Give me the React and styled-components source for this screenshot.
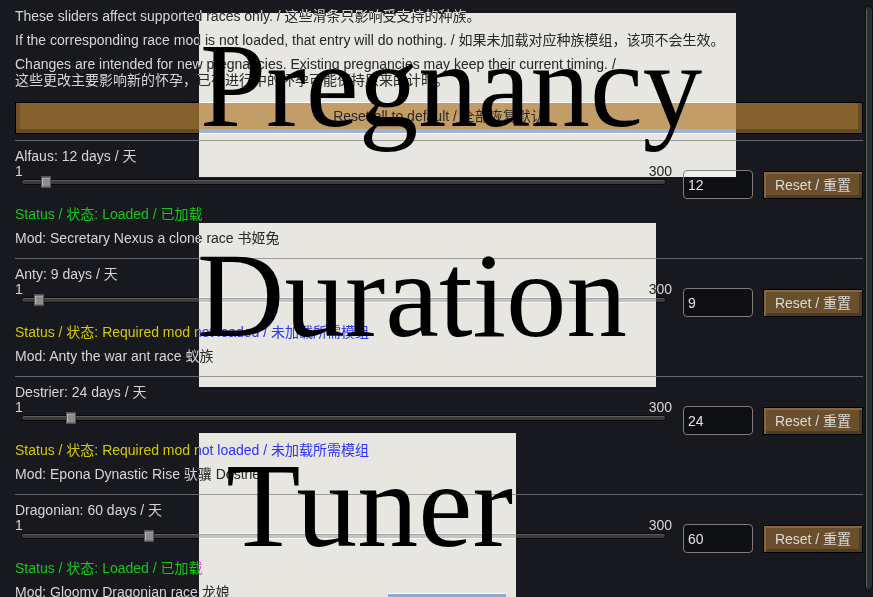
import React from "react";
import styled, { createGlobalStyle } from "styled-components";

const GlobalStyle = createGlobalStyle`
  html,
  body {
    margin: 0;
    padding: 0;
    background: #17191e;
  }
  body {
    font-family: "Liberation Sans", "Noto Sans CJK SC", sans-serif;
  }
`;

const Window = styled.div`
  position: relative;
  display: flex;
  width: 873px;
  height: 597px;
  overflow: hidden;
  background: #17191e;
  color: #d6d6d6;
  font-size: 14px;
  line-height: 16px;
`;

const Content = styled.div`
  flex: none;
  width: 848px;
  padding: 8px 0 0 15px;
`;

const Para = styled.p`
  margin: 0 0 8px;
`;

const ResetAll = styled.div`
  display: flex;
  box-sizing: border-box;
  height: 32px;
  margin-top: 14px;
  margin-bottom: 6px;
  padding: 0 4px 4px 4px;
  border: 1px solid #000;
  background: #17191e;
  box-shadow: inset 0 -4px 0 #654a25, inset 4px 0 0 #6e5029, inset -4px 0 0 #654a25;
`;

const ResetAllFace = styled.div`
  position: relative;
  z-index: 2;
  flex: 1;
  display: flex;
  align-items: center;
  justify-content: center;
  background: rgba(179, 127, 54, 0.71);
  color: #2c2a27;
`;

const Row = styled.div`
  border-top: 1px solid #63656a;
  padding: 7px 0 12px;
`;

const SliderLine = styled.div`
  display: flex;
  align-items: flex-start;
`;

const SliderColumn = styled.div`
  width: 657px;
`;

const Scale = styled.div`
  display: flex;
  justify-content: space-between;
  line-height: 14px;
  height: 14px;
`;

const Track = styled.div`
  position: relative;
  height: 4px;
  margin: 1px 6px 0;
  border: 1px solid #0a0a0a;
  border-radius: 3px;
  background: #3b3b3b;
  box-shadow: inset 0 1px 0 #5c5c5c;
`;

const Handle = styled.span`
  position: absolute;
  top: 50%;
  width: 8px;
  height: 9px;
  transform: translate(-50%, -50%);
  border: 1px solid #555;
  background: #8d8d8d;
  box-shadow: inset 1px 1px 0 #b8b8b8;
`;

const ValueBox = styled.div`
  display: flex;
  align-items: center;
  box-sizing: border-box;
  width: 70px;
  height: 29px;
  margin: 6px 0 0 11px;
  padding-left: 4px;
  border: 1px solid #7d7d7d;
  border-radius: 4px;
  background: #0e0f12;
  color: #e2e2e2;
`;

const ResetButton = styled.div`
  display: flex;
  align-items: center;
  justify-content: center;
  box-sizing: border-box;
  width: 100px;
  height: 28px;
  margin: 7px 0 0 10px;
  border: 1px solid #000;
  background: #6a4f2c;
  box-shadow: inset 2px 2px 0 #86683c, inset -3px -3px 0 #523c20;
  color: #dadada;
`;

const Status = styled.div`
  margin-top: 7px;
  color: ${(p) => (p.$loaded ? "#10cc10" : "#d4c800")};
`;

const ModLine = styled.div`
  margin-top: 8px;
`;

const Gutter = styled.div`
  flex: none;
  width: 8px;
  margin-left: 2px;
  padding-top: 6px;
`;

const Thumb = styled.div`
  width: 6px;
  height: 582px;
  border: 1px solid #0b0c0e;
  border-radius: 4px;
  background: #2c2e32;
  box-shadow: inset 1px 0 0 #5d5f63;
`;

/* the title card: an inverting pane with the serif word laid over it */
const Pane = styled.div`
  position: absolute;
  left: ${(p) => p.$x}px;
  top: ${(p) => p.$y}px;
  width: ${(p) => p.$w}px;
  height: ${(p) => p.$h}px;
  z-index: 1;
  backdrop-filter: invert(1);
  -webkit-backdrop-filter: invert(1);
`;

const WordLayer = styled.div`
  position: absolute;
  left: ${(p) => p.$x}px;
  top: ${(p) => p.$y}px;
  width: ${(p) => p.$w}px;
  height: ${(p) => p.$h}px;
  z-index: 3;
  overflow: hidden;
  pointer-events: none;
`;

const Word = styled.span`
  display: block;
  margin: 12px 0 0 ${(p) => p.$indent}px;
  font-family: "Liberation Serif", "Times New Roman", serif;
  font-size: ${(p) => p.$size}px;
  line-height: 1;
  color: #000;
  white-space: nowrap;
  transform-origin: 0 0;
  transform: scaleY(${(p) => (80.2 / (0.662 * p.$size)).toFixed(3)});
`;

const Tab = styled.span`
  position: absolute;
  left: 189px;
  top: 160px;
  width: 118px;
  height: 10px;
  border-top: 1px solid #fff;
  background: #8ea9d4;
`;

const races = [
  { name: "Alfaus", days: 12, loaded: true, mod: "Secretary Nexus a clone race 书姬兔" },
  { name: "Anty", days: 9, loaded: false, mod: "Anty the war ant race 蚁族" },
  { name: "Destrier", days: 24, loaded: false, mod: "Epona Dynastic Rise 驮骥 Destrier" },
  { name: "Dragonian", days: 60, loaded: true, mod: "Gloomy Dragonian race 龙娘" },
];

const cards = [
  { word: "Pregnancy", x: 199, y: 13, w: 537, h: 164, size: 119, indent: 1 },
  { word: "Duration", x: 199, y: 223, w: 457, h: 164, size: 121, indent: -2 },
  { word: "Tuner", x: 199, y: 433, w: 317, h: 170, size: 122, indent: 27, tab: true },
];

const MIN = 1;
const MAX = 300;

const RaceRow = ({ race }) => {
  const pct = ((race.days - MIN) / (MAX - MIN)) * 100;
  return (
    <Row>
      <div>
        {race.name}: {race.days} days / 天
      </div>
      <SliderLine>
        <SliderColumn>
          <Scale>
            <span>{MIN}</span>
            <span>{MAX}</span>
          </Scale>
          <Track>
            <Handle style={{ left: `${pct}%` }} />
          </Track>
        </SliderColumn>
        <ValueBox>{race.days}</ValueBox>
        <ResetButton>Reset / 重置</ResetButton>
      </SliderLine>
      <Status $loaded={race.loaded}>
        {race.loaded
          ? "Status / 状态: Loaded / 已加载"
          : "Status / 状态: Required mod not loaded / 未加载所需模组"}
      </Status>
      <ModLine>Mod: {race.mod}</ModLine>
    </Row>
  );
};

const App = () => {
  return (
    <>
      <GlobalStyle />
      <Window>
        <Content>
          <Para>These sliders affect supported races only. / 这些滑条只影响受支持的种族。</Para>
          <Para>
            If the corresponding race mod is not loaded, that entry will do nothing. /
            如果未加载对应种族模组，该项不会生效。
          </Para>
          <Para>
            Changes are intended for new pregnancies. Existing pregnancies may keep their current timing. /
            <br />
            这些更改主要影响新的怀孕，已在进行中的怀孕可能保持原来的计时。
          </Para>
          <ResetAll>
            <ResetAllFace>Reset all to default / 全部恢复默认</ResetAllFace>
          </ResetAll>
          {races.map((race) => (
            <RaceRow key={race.name} race={race} />
          ))}
        </Content>
        <Gutter>
          <Thumb />
        </Gutter>
        {cards.map((c) => (
          <React.Fragment key={c.word}>
            <Pane $x={c.x} $y={c.y} $w={c.w} $h={c.h} />
            <WordLayer $x={c.x} $y={c.y} $w={c.w} $h={c.h}>
              <Word $size={c.size} $indent={c.indent}>
                {c.word}
              </Word>
              {c.tab && <Tab />}
            </WordLayer>
          </React.Fragment>
        ))}
      </Window>
    </>
  );
};

export default App;
